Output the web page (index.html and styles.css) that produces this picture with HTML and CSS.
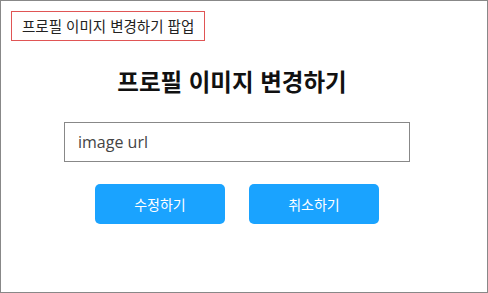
FILE: index.html
```html
<!DOCTYPE html>
<html lang="ko">
<head>
    <meta charset="UTF-8">
    <meta name="viewport" content="width=device-width, initial-scale=1.0">
    <title>프로필 이미지 변경하기 팝업</title>
    <link rel="stylesheet" href="styles.css">
</head>
<body>
    <div class="frame">
        <div class="label">프로필 이미지 변경하기 팝업</div>
        <div class="popup">
            <h1 class="popup-title">프로필 이미지 변경하기</h1>
            <input class="url-input" type="text" placeholder="image url">
            <div class="actions">
                <button class="btn">수정하기</button>
                <button class="btn">취소하기</button>
            </div>
        </div>
    </div>
</body>
</html>
```

FILE: styles.css
```css
body {
    margin: 0;
    font-family: "Noto Sans CJK KR", "Noto Sans", sans-serif;
    background: #fff;
}
.frame {
    box-sizing: border-box;
    width: 488px;
    height: 293px;
    border: 1px solid #888;
    padding: 10px;
}
.label {
    display: inline-block;
    box-sizing: border-box;
    height: 30px;
    padding: 0 10px;
    border: 1px solid #e05555;
    font-size: 14.5px;
    line-height: 28px;
    color: #222;
}
.popup {
    display: flex;
    flex-direction: column;
    align-items: center;
    width: 346px;
    margin-left: 53px;
}
.popup-title {
    margin: 20px 10px 0 0;
    font-size: 23.5px;
    font-weight: bold;
    line-height: 40px;
    color: #111;
}
.url-input {
    box-sizing: border-box;
    width: 346px;
    height: 40px;
    margin-top: 21px;
    padding: 0 13px;
    border: 1px solid #888;
    font-family: "Open Sans", sans-serif;
    font-size: 16px;
    color: #333;
    outline: none;
}
.url-input::placeholder {
    color: #444;
}
.actions {
    display: flex;
    gap: 24px;
    margin-top: 22px;
}
.btn {
    width: 130px;
    height: 40px;
    border: none;
    border-radius: 5px;
    background: #1aa3ff;
    color: #fff;
    font-family: "Noto Sans CJK KR", sans-serif;
    font-size: 14px;
    cursor: pointer;
}
```
